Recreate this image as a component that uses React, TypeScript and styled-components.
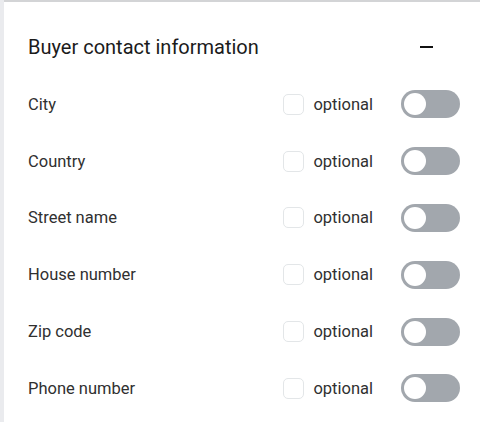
import React, { useState } from "react";
import styled, { createGlobalStyle } from "styled-components";

const GlobalStyle = createGlobalStyle`
  body {
    margin: 0;
    background: #eaebee;
    font-family: Roboto, "Liberation Sans", sans-serif;
  }
`;

const fields = [
  "City",
  "Country",
  "Street name",
  "House number",
  "Zip code",
  "Phone number",
];

const App: React.FC = () => {
  const [open, setOpen] = useState(true);
  return (
    <>
      <GlobalStyle />
      <Page>
        <Card>
          <Header>
            <Title>Buyer contact information</Title>
            <Collapse onClick={() => setOpen(!open)} aria-label="collapse">
              <span />
            </Collapse>
          </Header>
          {open && (
            <List>
              {fields.map((f) => (
                <Row key={f}>
                  <Label>{f}</Label>
                  <Optional>
                    <Check type="checkbox" />
                    optional
                  </Optional>
                  <Toggle>
                    <Knob />
                  </Toggle>
                </Row>
              ))}
            </List>
          )}
        </Card>
      </Page>
    </>
  );
};

export default App;

const Page = styled.div`
  height: 422px;
  padding-left: 4px;
  overflow: hidden;
`;

const Card = styled.section`
  background: #fff;
  border-top: 2px solid #d3d4d6;
  min-height: 440px;
  padding: 33px 20px 0 24px;
`;

const Header = styled.div`
  display: flex;
  align-items: center;
  justify-content: space-between;
  height: 24px;
  margin-bottom: 17px;
`;

const Title = styled.h2`
  margin: 0;
  font-size: 20px;
  font-weight: 400;
  line-height: 24px;
  color: #1b1b1b;
`;

const Collapse = styled.button`
  border: none;
  background: none;
  padding: 0;
  width: 14px;
  height: 24px;
  margin-right: 26px;
  display: flex;
  align-items: center;

  span {
    display: block;
    width: 13px;
    height: 1.5px;
    background: #111;
  }
`;

const List = styled.div`
  display: flex;
  flex-direction: column;
`;

const Row = styled.div`
  display: flex;
  align-items: center;
  height: 56.8px;
`;

const Label = styled.span`
  flex: 1;
  font-size: 16.5px;
  color: #303030;
`;

const Optional = styled.label`
  display: flex;
  align-items: center;
  gap: 9px;
  font-size: 16.5px;
  color: #303030;
  margin-right: 28px;
`;

const Check = styled.input`
  appearance: none;
  margin: 0;
  width: 21px;
  height: 21px;
  border: 1.5px solid #e3e6e8;
  border-radius: 5px;
  background: #fff;
`;

const Toggle = styled.div`
  width: 59px;
  height: 28px;
  border-radius: 14px;
  background: #a2a7ad;
  padding: 3px;
  box-sizing: border-box;
  display: flex;
  align-items: center;
`;

const Knob = styled.span`
  width: 22px;
  height: 22px;
  border-radius: 50%;
  background: #fff;
`;
